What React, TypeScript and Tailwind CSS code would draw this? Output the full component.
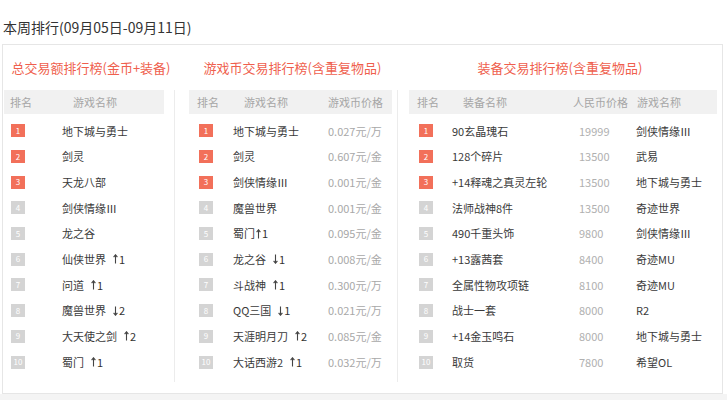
import React from "react";

type Chg = { dir: "up" | "down"; n: number; tight?: boolean } | undefined;

const FONT = { fontFamily: '"Noto Sans CJK SC", "Microsoft YaHei", sans-serif' };

function Arrow({ dir }: { dir: "up" | "down" }) {
  return (
    <svg width="5" height="10" viewBox="0 0 5 10" className="inline-block">
      {dir === "up" ? (
        <path d="M2.5 9.5V1M0.6 3.2L2.5 0.8L4.4 3.2" stroke="#444" strokeWidth="1.1" fill="none" />
      ) : (
        <path d="M2.5 0.5V9M0.6 6.8L2.5 9.2L4.4 6.8" stroke="#444" strokeWidth="1.1" fill="none" />
      )}
    </svg>
  );
}

function Badge({ n }: { n: number }) {
  return (
    <div
      className={`w-[14px] h-[13px] flex items-center justify-center text-white text-[8px] leading-none ${
        n <= 3 ? "bg-[#f2705a]" : "bg-[#d4d4d4]"
      }`}
    >
      {n}
    </div>
  );
}

function Name({ text, chg }: { text: string; chg: Chg }) {
  return (
    <span className="flex items-center whitespace-nowrap">
      <span>{text}</span>
      {chg && (
        <span className={`flex items-center text-[#333] ${chg.tight ? "ml-[1px]" : "ml-[7px]"}`}>
          <Arrow dir={chg.dir} />
          <span className="ml-[1px]">{chg.n}</span>
        </span>
      )}
    </span>
  );
}

const col1: { name: string; chg?: Chg }[] = [
  { name: "地下城与勇士" },
  { name: "剑灵" },
  { name: "天龙八部" },
  { name: "剑侠情缘Ⅲ" },
  { name: "龙之谷" },
  { name: "仙侠世界", chg: { dir: "up", n: 1 } },
  { name: "问道", chg: { dir: "up", n: 1 } },
  { name: "魔兽世界", chg: { dir: "down", n: 2 } },
  { name: "大天使之剑", chg: { dir: "up", n: 2 } },
  { name: "蜀门", chg: { dir: "up", n: 1 } },
];

const col2: { name: string; price: string; chg?: Chg }[] = [
  { name: "地下城与勇士", price: "0.027元/万" },
  { name: "剑灵", price: "0.607元/金" },
  { name: "剑侠情缘Ⅲ", price: "0.001元/金" },
  { name: "魔兽世界", price: "0.001元/金" },
  { name: "蜀门", price: "0.095元/金", chg: { dir: "up", n: 1, tight: true } },
  { name: "龙之谷", price: "0.008元/金", chg: { dir: "down", n: 1 } },
  { name: "斗战神", price: "0.300元/万", chg: { dir: "up", n: 1 } },
  { name: "QQ三国", price: "0.021元/万", chg: { dir: "down", n: 1 } },
  { name: "天涯明月刀", price: "0.085元/金", chg: { dir: "up", n: 2 } },
  { name: "大话西游2", price: "0.032元/万", chg: { dir: "up", n: 1 } },
];

const col3 = [
  ["90玄晶瑰石", "19999", "剑侠情缘Ⅲ"],
  ["128个碎片", "13500", "武易"],
  ["+14释魂之真灵左轮", "13500", "地下城与勇士"],
  ["法师战神8件", "13500", "奇迹世界"],
  ["490千重头饰", "9800", "剑侠情缘Ⅲ"],
  ["+13露茜套", "8400", "奇迹MU"],
  ["全属性物攻项链", "8100", "奇迹MU"],
  ["战士一套", "8000", "R2"],
  ["+14金玉鸣石", "8000", "地下城与勇士"],
  ["取货", "7800", "希望OL"],
];

function Title({ children }: { children: React.ReactNode }) {
  return (
    <div className="h-[20px] leading-[20px] text-[13px] text-[#ef5f4e] text-center whitespace-nowrap mb-[12px]">
      {children}
    </div>
  );
}

export default function App() {
  return (
    <div className="w-[727px] h-[400px] bg-white flex flex-col overflow-hidden text-[11px]" style={FONT}>
      <div className="h-[44px] pl-[3px] pt-[16px] text-[14px] leading-[22px] text-[#333] whitespace-nowrap">
        本周排行(09月05日-09月11日)
      </div>
      <div className="ml-[2px] w-[721px] h-[350px] border border-[#e6e6e6] flex pt-[13px]">
        {/* Column 1 */}
        <div className="w-[172px] flex flex-col">
          <div className="pl-[4px]">
            <Title>总交易额排行榜(金币+装备)</Title>
          </div>
          <div className="border-r border-[#ececec] h-[292px] pl-[1px] pr-[10px]">
            <div className="h-[24px] bg-[#f1f1f1] flex items-center text-[#a6a6a6]">
              <span className="w-[69px] pl-[6px]">排名</span>
              <span>游戏名称</span>
            </div>
            <div className="mt-[4px]">
              {col1.map((r, i) => (
                <div key={i} className="h-[25.7px] flex items-center text-[#3a3a3a]">
                  <div className="w-[58px] pl-[7px]">
                    <Badge n={i + 1} />
                  </div>
                  <Name text={r.name} chg={r.chg} />
                </div>
              ))}
            </div>
          </div>
        </div>
        {/* Column 2 */}
        <div className="w-[223px] flex flex-col">
          <div className="pl-[12px]">
            <Title>游戏币交易排行榜(含重复物品)</Title>
          </div>
          <div className="border-r border-[#ececec] h-[292px] pl-[14px] pr-[5px]">
            <div className="h-[24px] bg-[#f1f1f1] flex items-center text-[#a6a6a6]">
              <span className="w-[55px] pl-[8px]">排名</span>
              <span className="w-[84px]">游戏名称</span>
              <span>游戏币价格</span>
            </div>
            <div className="mt-[4px]">
              {col2.map((r, i) => (
                <div key={i} className="h-[25.7px] flex items-center text-[#3a3a3a]">
                  <div className="w-[44px] pl-[10px]">
                    <Badge n={i + 1} />
                  </div>
                  <div className="w-[95px]">
                    <Name text={r.name} chg={r.chg} />
                  </div>
                  <span className="text-[#a8a8a8] whitespace-nowrap">{r.price}</span>
                </div>
              ))}
            </div>
          </div>
        </div>
        {/* Column 3 */}
        <div className="flex-1 flex flex-col">
          <Title>装备交易排行榜(含重复物品)</Title>
          <div className="h-[292px] pl-[11px] pr-[5px]">
            <div className="h-[24px] bg-[#f1f1f1] flex items-center text-[#a6a6a6]">
              <span className="w-[54px] pl-[8px]">排名</span>
              <span className="w-[110px]">装备名称</span>
              <span className="w-[64px]">人民币价格</span>
              <span>游戏名称</span>
            </div>
            <div className="mt-[4px]">
              {col3.map((r, i) => (
                <div key={i} className="h-[25.7px] flex items-center text-[#3a3a3a]">
                  <div className="w-[43px] pl-[10px]">
                    <Badge n={i + 1} />
                  </div>
                  <span className="w-[127px] whitespace-nowrap">{r[0]}</span>
                  <span className="w-[57px] text-[#b0b0b0]">{r[1]}</span>
                  <span className="whitespace-nowrap">{r[2]}</span>
                </div>
              ))}
            </div>
          </div>
        </div>
      </div>
      <div className="flex-1 bg-[#f4f4f4]" />
    </div>
  );
}
